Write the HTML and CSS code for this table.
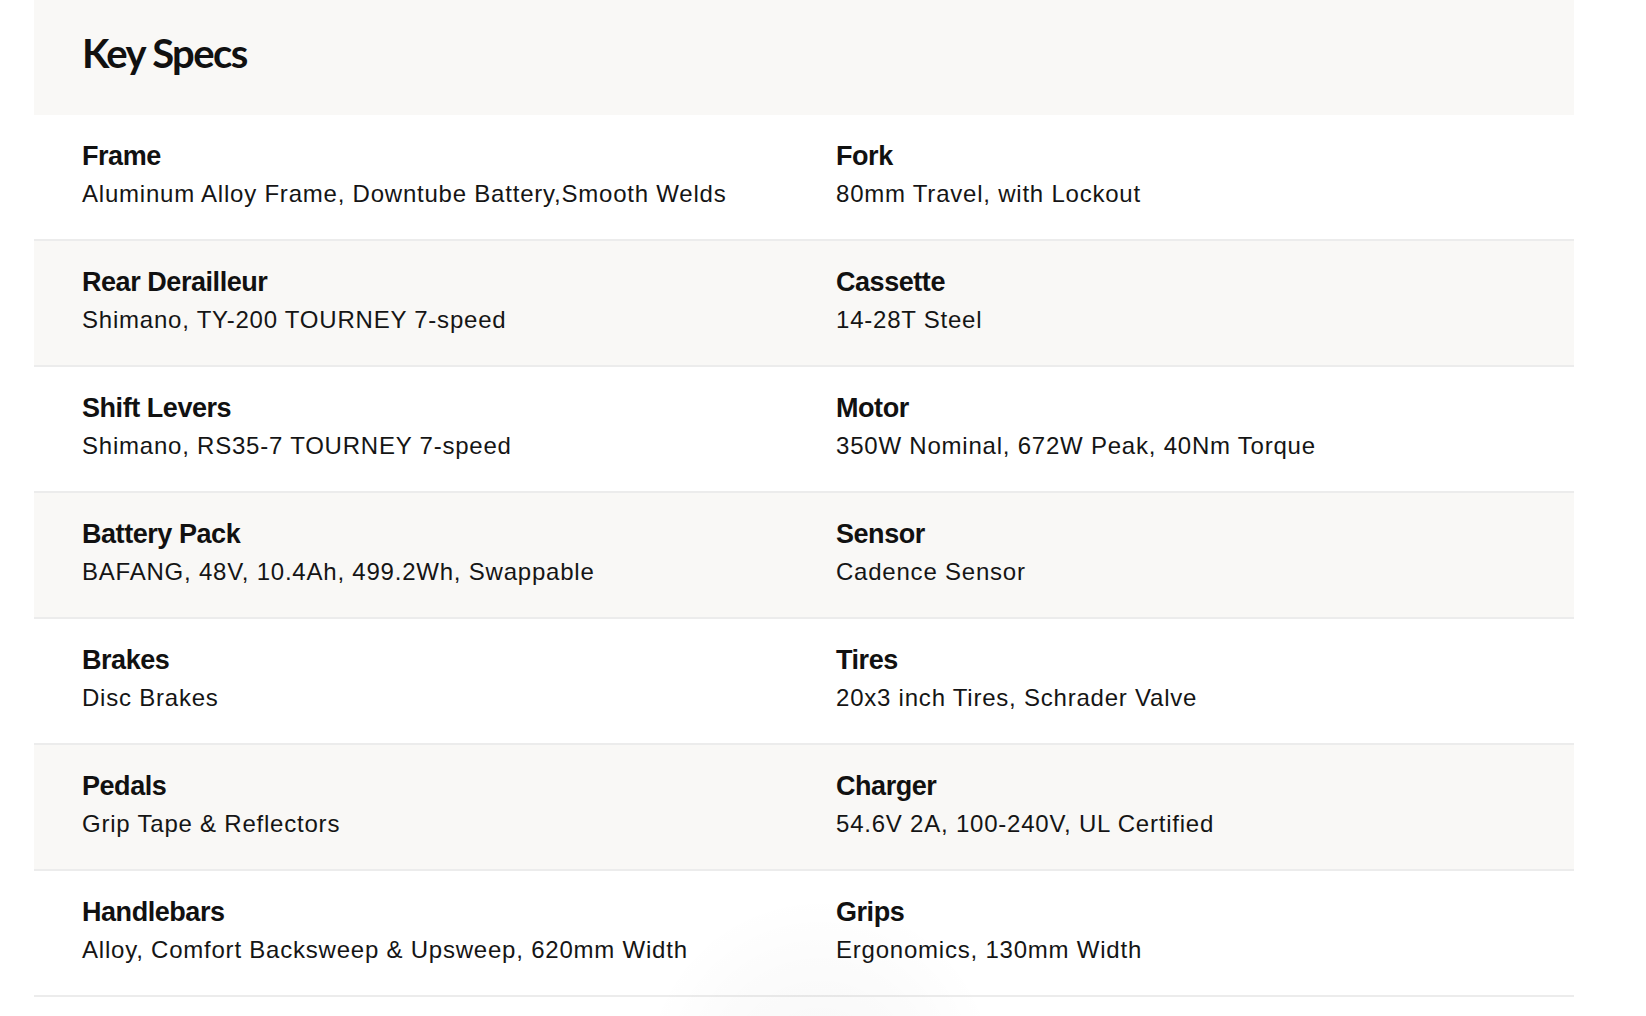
FILE: index.html
```html
<!DOCTYPE html>
<html lang="en">
<head>
<meta charset="utf-8">
<title>Key Specs</title>
<link rel="stylesheet" href="styles.css">
</head>
<body>
<section class="specs">
  <header class="specs-head"><h2 class="specs-title">Key Specs</h2></header>
  <div class="row">
    <div class="item"><div class="label">Frame</div><div class="value">Aluminum Alloy Frame, Downtube Battery,Smooth Welds</div></div>
    <div class="item"><div class="label">Fork</div><div class="value">80mm Travel, with Lockout</div></div>
  </div>
  <div class="row alt">
    <div class="item"><div class="label">Rear Derailleur</div><div class="value">Shimano, TY-200 TOURNEY 7-speed</div></div>
    <div class="item"><div class="label">Cassette</div><div class="value">14-28T Steel</div></div>
  </div>
  <div class="row">
    <div class="item"><div class="label">Shift Levers</div><div class="value">Shimano, RS35-7 TOURNEY 7-speed</div></div>
    <div class="item"><div class="label">Motor</div><div class="value">350W Nominal, 672W Peak, 40Nm Torque</div></div>
  </div>
  <div class="row alt">
    <div class="item"><div class="label">Battery Pack</div><div class="value">BAFANG, 48V, 10.4Ah, 499.2Wh, Swappable</div></div>
    <div class="item"><div class="label">Sensor</div><div class="value">Cadence Sensor</div></div>
  </div>
  <div class="row">
    <div class="item"><div class="label">Brakes</div><div class="value">Disc Brakes</div></div>
    <div class="item"><div class="label">Tires</div><div class="value">20x3 inch Tires, Schrader Valve</div></div>
  </div>
  <div class="row alt">
    <div class="item"><div class="label">Pedals</div><div class="value">Grip Tape &amp; Reflectors</div></div>
    <div class="item"><div class="label">Charger</div><div class="value">54.6V 2A, 100-240V, UL Certified</div></div>
  </div>
  <div class="row">
    <div class="item"><div class="label">Handlebars</div><div class="value">Alloy, Comfort Backsweep &amp; Upsweep, 620mm Width</div></div>
    <div class="item"><div class="label">Grips</div><div class="value">Ergonomics, 130mm Width</div></div>
  </div>
</section>
<div class="glow"></div>
</body>
</html>
```

FILE: styles.css
```css
html, body {
  margin: 0;
  padding: 0;
  background: #ffffff;
}
html {
  overflow: hidden;
}
body {
  font-family: "Liberation Sans", Arial, sans-serif;
  color: #111111;
  height: 1016px;
  overflow: hidden;
  position: relative;
}
.specs {
  margin-left: 34px;
  width: 1540px;
}
.specs-head {
  background: #f9f8f6;
  height: 115px;
  box-sizing: border-box;
  padding: 29px 48px 0;
}
.specs-title {
  margin: 0;
  font-family: "Lato", sans-serif;
  font-weight: 700;
  font-size: 40px;
  line-height: 48px;
  letter-spacing: -1.6px;
  color: #111111;
}
.row {
  display: grid;
  grid-template-columns: 754px 1fr;
  padding: 25px 48px 29px;
  border-bottom: 2px solid #ececec;
  background: #ffffff;
}
.row.alt {
  background: #f9f8f6;
}
.label {
  font-weight: 700;
  font-size: 27px;
  line-height: 32px;
  letter-spacing: -0.45px;
}
.value {
  margin-top: 6px;
  font-size: 24px;
  line-height: 32px;
  letter-spacing: 0.78px;
  color: #151515;
}
.glow {
  position: absolute;
  left: 640px;
  top: 895px;
  width: 360px;
  height: 121px;
  background: radial-gradient(circle 180px at 50% 180px, rgba(0,0,0,0.03), rgba(0,0,0,0.015) 60%, rgba(0,0,0,0));
  pointer-events: none;
}
```
